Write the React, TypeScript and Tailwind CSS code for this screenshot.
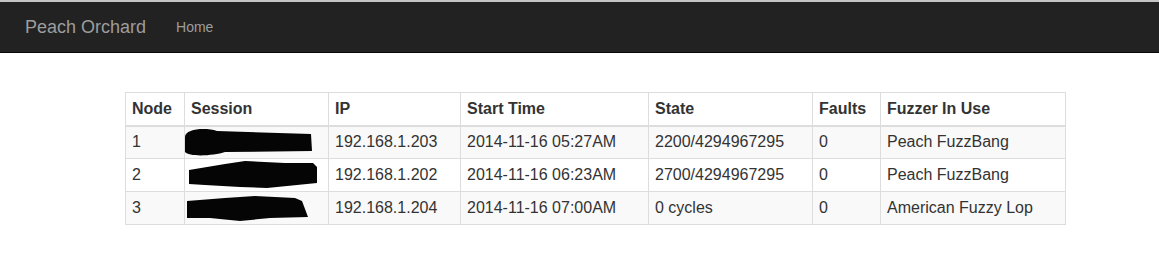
const rows = [
  { node: "1", ip: "192.168.1.203", start: "2014-11-16 05:27AM", state: "2200/4294967295", faults: "0", fuzzer: "Peach FuzzBang", blob: "M0,10 C0,2 20,0 32,4 L126,7 L127,24 L40,25 C28,29 4,30 0,25 Z" },
  { node: "2", ip: "192.168.1.202", start: "2014-11-16 06:23AM", state: "2700/4294967295", faults: "0", fuzzer: "Peach FuzzBang", blob: "M4,11 L40,5 L60,2 L100,4 L128,4 L132,8 L132,24 L82,29 L55,28 L20,26 L4,25 Z" },
  { node: "3", ip: "192.168.1.204", start: "2014-11-16 07:00AM", state: "0 cycles", faults: "0", fuzzer: "American Fuzzy Lop", blob: "M2,9 L40,6 L70,4 L110,6 L117,9 L123,25 L85,26 L55,29 L25,26 L2,26 Z" },
];

const widths = [59, 144, 132, 188, 164, 68, 185];
const headers = ["Node", "Session", "IP", "Start Time", "State", "Faults", "Fuzzer In Use"];

export default function App() {
  return (
    <div className="min-h-[275px] bg-white font-['Liberation_Sans',Arial,sans-serif] text-[#333]">
      <nav className="flex h-[53px] items-center border-t-2 border-b border-t-[#c4c4c4] border-b-[#080808] bg-[#222]">
        <span className="ml-[25px] text-[18px] leading-none text-[#9d9d9d]">Peach Orchard</span>
        <span className="ml-[30px] text-[14px] leading-none text-[#9d9d9d]">Home</span>
      </nav>
      <div className="pt-[39px] pl-[125px]">
        <table className="w-[940px] table-fixed border-collapse border border-[#ddd] text-[16px]">
          <colgroup>
            {widths.map((w, i) => (
              <col key={i} style={{ width: w }} />
            ))}
          </colgroup>
          <thead>
            <tr>
              {headers.map((h) => (
                <th
                  key={h}
                  className="h-[33px] border border-b-2 border-[#ddd] px-[6px] text-left align-middle font-bold leading-[18px]"
                >
                  {h}
                </th>
              ))}
            </tr>
          </thead>
          <tbody>
            {rows.map((r, i) => (
              <tr key={r.node} className={i % 2 === 0 ? "bg-[#f9f9f9]" : "bg-white"}>
                <td className="h-[33px] border border-[#ddd] px-[6px] leading-[18px]">{r.node}</td>
                <td className="relative h-[33px] border border-[#ddd] px-[6px] leading-[18px]">
                  <svg className="absolute top-0 left-0" width="140" height="33" viewBox="0 0 140 33">
                    <path d={r.blob} fill="#050505" />
                  </svg>
                </td>
                <td className="h-[33px] border border-[#ddd] px-[6px] leading-[18px]">{r.ip}</td>
                <td className="h-[33px] border border-[#ddd] px-[6px] leading-[18px]">{r.start}</td>
                <td className="h-[33px] border border-[#ddd] px-[6px] leading-[18px]">{r.state}</td>
                <td className="h-[33px] border border-[#ddd] px-[6px] leading-[18px]">{r.faults}</td>
                <td className="h-[33px] border border-[#ddd] px-[6px] leading-[18px]">{r.fuzzer}</td>
              </tr>
            ))}
          </tbody>
        </table>
      </div>
    </div>
  );
}
